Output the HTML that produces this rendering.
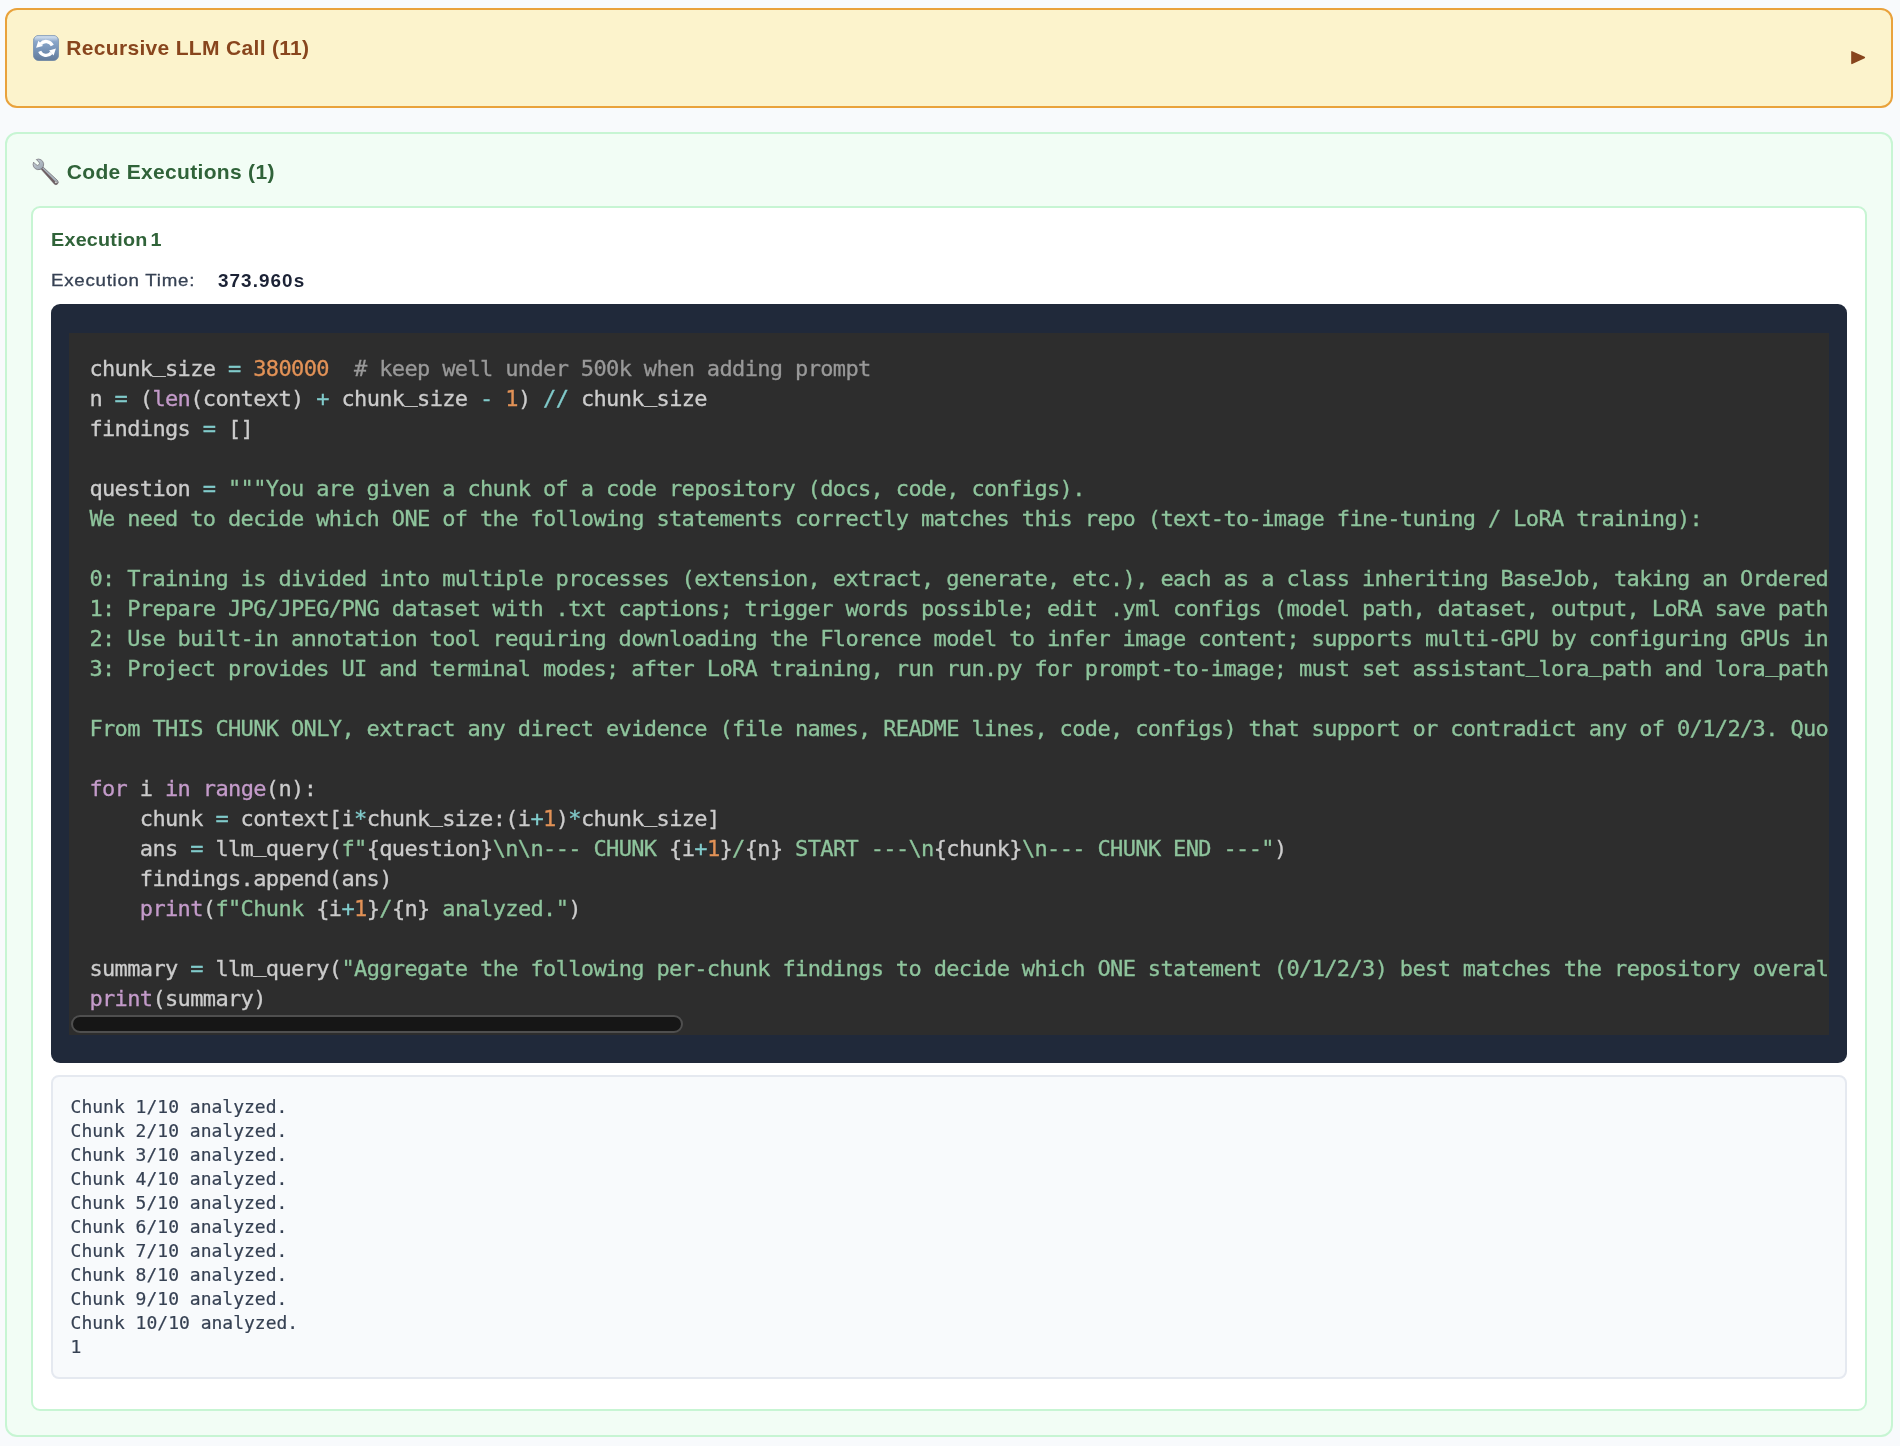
<!DOCTYPE html>
<html lang="en">
<head>
<meta charset="utf-8">
<title>Recursive LLM Call</title>
<style>
*{box-sizing:border-box}
html,body{margin:0;padding:0}
body{width:1900px;height:1446px;overflow:hidden;background:#f8fafc;font-family:"Liberation Sans",sans-serif;position:relative}
main{position:absolute;left:0;top:0;width:1900px;height:1446px;will-change:transform}
.rlm{position:absolute;left:5px;top:8px;width:1888px;height:100px;background:#fcf3cc;border:2px solid #e9a23b;border-radius:12px}
.rlm .ico{position:absolute;left:26px;top:25px;width:26px;height:26px}
.rlm h3{position:absolute;left:59.3px;top:25.4px;margin:0;font-size:21px;line-height:26px;font-weight:700;letter-spacing:.32px;color:#88451d;white-space:nowrap}
.rlm .arrow{position:absolute;left:1843px;top:39px;width:18px;height:18px}
.exec{position:absolute;left:5px;top:132px;width:1888px;height:1305px;background:#f2fdf5;border:2px solid #c7f5d3;border-radius:12px}
.exec .ico{position:absolute;left:21px;top:20px;width:36px;height:36px}
.exec h3{position:absolute;left:59.8px;top:25.3px;margin:0;font-size:21px;line-height:26px;font-weight:700;letter-spacing:.32px;color:#306339;white-space:nowrap}
.card{position:absolute;left:24px;top:72px;width:1836px;height:1205px;background:#fff;border:2px solid #c7f5d3;border-radius:9px}
.card h4{position:absolute;left:18px;top:19.5px;margin:0;font-size:19px;line-height:24px;font-weight:700;letter-spacing:.22px;word-spacing:-2.5px;transform:scaleX(1.04);transform-origin:0 0;color:#306339;white-space:nowrap}
.meta{position:absolute;left:18px;top:60.3px;width:400px;height:24px;font-size:17px;line-height:24px;color:#364153;white-space:nowrap}
.meta span{position:absolute;left:0;top:.5px;letter-spacing:.67px;transform:scaleX(1.1);transform-origin:0 0;-webkit-text-stroke:.3px}
.meta b{position:absolute;left:166.5px;top:.4px;font-size:18px;font-weight:700;letter-spacing:1px;transform:scaleX(1.05);transform-origin:0 0;color:#1b2235}
.codewrap{position:absolute;left:18px;top:96.3px;width:1796px;height:758.5px;background:#20293a;border-radius:9px}
pre.code{position:absolute;left:18px;top:28.7px;width:1760px;height:702px;margin:0;padding:21.1px 0 0 20.4px;background:#2d2d2d;color:#ccc;overflow:hidden;font-family:"DejaVu Sans Mono","Liberation Mono",monospace;font-size:22px;letter-spacing:-0.6451px;line-height:30px;white-space:pre;tab-size:4}
pre.code code{font:inherit;-webkit-text-stroke:.3px}
.o{color:#81cbcb}.n{color:#e29257}.k{color:#c49bca}.s{color:#8ec49c}.c{color:#999}
.sb{position:absolute;left:2px;bottom:2px;width:612px;height:18px;border-radius:9px;background:#161616;border:2px solid #4f4f4f}
.u{position:relative;top:-4.4px}
pre.out{position:absolute;left:18px;top:867.3px;width:1796px;height:303.5px;margin:0;padding:17.8px 0 0 17.6px;background:#f8fafc;border:2px solid #e5e9f0;border-radius:8px;color:#364153;font-family:"DejaVu Sans Mono","Liberation Mono",monospace;font-size:18px;line-height:24px;white-space:pre;overflow:hidden;-webkit-text-stroke:.2px}
</style>
</head>
<body>
<main>
<section class="rlm">
  <svg class="ico" viewBox="0 0 26 26" aria-hidden="true">
    <defs>
      <linearGradient id="g1" x1="0" y1="0" x2="0" y2="1"><stop offset="0" stop-color="#a9bfda"/><stop offset=".3" stop-color="#86a3c6"/><stop offset=".6" stop-color="#7592b6"/><stop offset="1" stop-color="#637b9a"/></linearGradient>
      <linearGradient id="g2" x1="0" y1="0" x2="0" y2="1"><stop offset="0" stop-color="#d3e0ef"/><stop offset="1" stop-color="#d3e0ef" stop-opacity="0"/></linearGradient>
    </defs>
    <rect x=".3" y=".3" width="25.4" height="25.4" rx="5.6" fill="url(#g1)" stroke="#6883a6" stroke-width=".6"/>
    <rect x="1.6" y="1.2" width="22.8" height="5" rx="3" fill="url(#g2)"/>
    <g fill="none" stroke="#fff" stroke-width="3.3">
      <path d="M19.3 10.51 A6.95 6.95 0 0 0 7.68 8.98"/>
      <path d="M6.7 16.39 A6.95 6.95 0 0 0 18.32 17.92"/>
    </g>
    <path d="M5.4 5.85 L9.9 10.9 L3.1 12.8 Z M20.6 20.55 L16.1 15.5 L22.9 13.6 Z" fill="#fff"/>
  </svg>
  <h3>Recursive LLM Call (11)</h3>
  <svg class="arrow" viewBox="0 0 18 18" aria-hidden="true"><path d="M1.9 2.8 L14.4 8.5 L1.9 14.4 Z" fill="#88451d" stroke="#88451d" stroke-width="1.4" stroke-linejoin="round"/></svg>
</section>
<section class="exec">
  <svg class="ico" viewBox="0 0 36 36" aria-hidden="true">
    <defs><linearGradient id="g3" x1="0" y1="0" x2="1" y2="1"><stop offset="0" stop-color="#c9d1d9"/><stop offset="1" stop-color="#98a3ae"/></linearGradient></defs>
    <path d="M12.9 15.1 L15.0 12.9 L29.6 26.5 A2.4 2.4 0 0 1 26.2 29.9 Z" fill="#6d5d61"/>
    <path d="M13.95 14.0 L15.0 12.9 L29.6 26.5 A2.4 2.4 0 0 1 29.4 29.6 Z" fill="#aab4be"/>
    <path d="M12.9 15.1 L15.0 12.9 L29.6 26.5 A2.4 2.4 0 0 1 26.2 29.9 Z" fill="none" stroke="#6a6468" stroke-width=".5"/>
    <circle cx="27.9" cy="28.25" r="1.15" fill="#eef6f1" stroke="#5f5357" stroke-width=".5"/>
    <path d="M8.31 5.53 A5.3 5.3 0 1 1 5.59 8.17 L8.26 10.84 A1.9 1.9 0 0 0 10.94 8.16 Z" fill="url(#g3)" stroke="#6f6c72" stroke-width=".7" stroke-linejoin="round"/>
  </svg>
  <h3>Code Executions (1)</h3>
  <div class="card">
    <h4>Execution 1</h4>
    <div class="meta"><span>Execution Time:</span> <b>373.960s</b></div>
    <div class="codewrap">
<pre class="code"><code>chunk<span class="u">_</span>size <span class="o">=</span> <span class="n">380000</span>  <span class="c"># keep well under 500k when adding prompt</span>
n <span class="o">=</span> (<span class="k">len</span>(context) <span class="o">+</span> chunk<span class="u">_</span>size <span class="o">-</span> <span class="n">1</span>) <span class="o">//</span> chunk<span class="u">_</span>size
findings <span class="o">=</span> []

question <span class="o">=</span> <span class="s">"""You are given a chunk of a code repository (docs, code, configs).
We need to decide which ONE of the following statements correctly matches this repo (text-to-image fine-tuning / LoRA training):

0: Training is divided into multiple processes (extension, extract, generate, etc.), each as a class inheriting BaseJob, taking an OrderedDict config.
1: Prepare JPG/JPEG/PNG dataset with .txt captions; trigger words possible; edit .yml configs (model path, dataset, output, LoRA save path, etc.).
2: Use built-in annotation tool requiring downloading the Florence model to infer image content; supports multi-GPU by configuring GPUs in the config.
3: Project provides UI and terminal modes; after LoRA training, run run.py for prompt-to-image; must set assistant<span class="u">_</span>lora<span class="u">_</span>path and lora<span class="u">_</span>path in config.

From THIS CHUNK ONLY, extract any direct evidence (file names, README lines, code, configs) that support or contradict any of 0/1/2/3. Quote briefly."""</span>

<span class="k">for</span> i <span class="k">in</span> <span class="k">range</span>(n):
    chunk <span class="o">=</span> context[i<span class="o">*</span>chunk<span class="u">_</span>size:(i<span class="o">+</span><span class="n">1</span>)<span class="o">*</span>chunk<span class="u">_</span>size]
    ans <span class="o">=</span> llm<span class="u">_</span>query(<span class="s">f"</span>{question}<span class="s">\n\n--- CHUNK </span>{i<span class="o">+</span><span class="n">1</span>}<span class="s">/</span>{n}<span class="s"> START ---\n</span>{chunk}<span class="s">\n--- CHUNK END ---"</span>)
    findings.append(ans)
    <span class="k">print</span>(<span class="s">f"Chunk </span>{i<span class="o">+</span><span class="n">1</span>}<span class="s">/</span>{n}<span class="s"> analyzed."</span>)

summary <span class="o">=</span> llm<span class="u">_</span>query(<span class="s">"Aggregate the following per-chunk findings to decide which ONE statement (0/1/2/3) best matches the repository overall:\n"</span> <span class="o">+</span> "\n".join(findings))
<span class="k">print</span>(summary)</code><span class="sb"></span></pre>
    </div>
<pre class="out">Chunk 1/10 analyzed.
Chunk 2/10 analyzed.
Chunk 3/10 analyzed.
Chunk 4/10 analyzed.
Chunk 5/10 analyzed.
Chunk 6/10 analyzed.
Chunk 7/10 analyzed.
Chunk 8/10 analyzed.
Chunk 9/10 analyzed.
Chunk 10/10 analyzed.
1</pre>
  </div>
</section>
</main>
</body>
</html>
